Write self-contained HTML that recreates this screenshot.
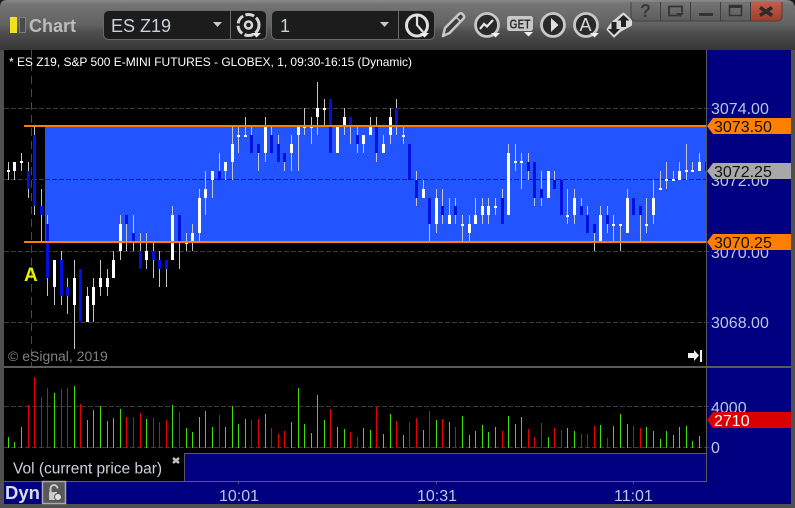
<!DOCTYPE html>
<html><head><meta charset="utf-8"><title>Chart</title>
<style>
html,body{margin:0;padding:0;background:#3c3c3c;width:795px;height:508px;overflow:hidden}
svg{display:block}
text{font-family:"Liberation Sans",sans-serif}
.ax{font-size:16px;fill:#bcc6e2}
.tg{font-size:16px;fill:#101010}
</style></head><body>
<svg width="795" height="508" viewBox="0 0 795 508" xmlns="http://www.w3.org/2000/svg">
<defs>
<linearGradient id="tb" x1="0" y1="0" x2="0" y2="1"><stop offset="0" stop-color="#8a8a8a"/><stop offset=".08" stop-color="#747474"/><stop offset=".5" stop-color="#626262"/><stop offset=".62" stop-color="#505050"/><stop offset="1" stop-color="#363636"/></linearGradient>
<linearGradient id="bt" x1="0" y1="0" x2="0" y2="1"><stop offset="0" stop-color="#747474"/><stop offset="1" stop-color="#5c5c5c"/></linearGradient>
<linearGradient id="rd" x1="0" y1="0" x2="0" y2="1"><stop offset="0" stop-color="#c0604a"/><stop offset="1" stop-color="#a23c2a"/></linearGradient>
</defs>
<rect width="795" height="508" fill="#505050"/>
<path d="M0 50V8Q0 0 8 0H785Q795 0 795 10V50Z" fill="url(#tb)"/>
<path d="M0 0H6Q0 0 0 6ZM795 0H787Q795 0 795 8Z" fill="#1c1c1c"/>
<!-- chart area -->
<rect x="4" y="50" width="702" height="431" fill="#000"/>
<rect x="707" y="50" width="84" height="454" fill="#000080"/>
<rect x="4" y="482" width="703" height="22" fill="#000080"/>
<rect x="185" y="454" width="521" height="27" fill="#000080"/>
<!-- blue zone -->
<rect x="45" y="127" width="661" height="114" fill="#2255ff"/>
<!-- grid -->
<g stroke="#3c3c3c" stroke-width="1" stroke-dasharray="5 2" fill="none" shape-rendering="crispEdges">
<path d="M4 108.5H712M4 251.5H712M4 322.5H712M4 406.5H712M4 447.5H712"/>
<path d="M45 179.5H712" stroke="#20264a"/>
<path d="M4 179.5H45"/>
<path d="M31.5 50V366" stroke-dasharray="8 5" stroke="#484848"/>
</g>
<!-- wicks -->
<path fill="none" stroke="#c4c4c4" stroke-width="1" shape-rendering="crispEdges" d="M8.5 162V180M14.5 162V180M21.5 153V171M28.5 162V198M34.5 126V215M41.5 189V242M47.5 215V296M54.5 260V305M61.5 251V305M67.5 278V314M74.5 260V349M87.5 287V322M93.5 278V322M100.5 260V296M107.5 269V296M113.5 251V278M120.5 215V260M126.5 215V251M133.5 215V251M140.5 233V269M146.5 233V269M153.5 242V278M159.5 251V287M166.5 260V287M172.5 206V260M179.5 215V269M186.5 233V251M192.5 224V251M199.5 189V242M205.5 171V215M212.5 171V198M219.5 153V180M225.5 162V180M232.5 126V180M238.5 126V153M245.5 117V137M251.5 126V153M258.5 144V171M265.5 117V162M271.5 126V153M278.5 135V162M284.5 153V171M291.5 135V171M298.5 126V171M304.5 108V135M311.5 117V144M317.5 82V135M324.5 99V126M344.5 108V135M350.5 117V144M357.5 126V153M363.5 135V153M370.5 117V135M376.5 117V162M383.5 135V153M390.5 108V144M396.5 99V135M403.5 126V144M416.5 171V206M423.5 180V198M429.5 198V242M436.5 189V233M442.5 189V224M449.5 198V224M455.5 198V224M462.5 215V242M469.5 215V242M475.5 198V224M482.5 198V224M488.5 198V224M495.5 198V215M502.5 189V224M508.5 144V215M515.5 144V171M521.5 153V189M528.5 153V180M534.5 162V206M541.5 171V206M554.5 171V189M567.5 189V224M574.5 189V224M581.5 198V215M587.5 206V233M594.5 224V251M600.5 206V242M607.5 206V233M613.5 215V242M620.5 224V251M627.5 189V233M640.5 206V242M646.5 198V233M653.5 180V224M660.5 171V189M666.5 162V189M673.5 171V180M679.5 162V180M686.5 144V180M692.5 162V172M699.5 153V171"/>
<!-- white bodies -->
<path fill="none" stroke="#fff" stroke-width="3" shape-rendering="crispEdges" d="M8.5 170V172M14.5 162V171M21.5 161V163M54.5 260V287M74.5 278V305M87.5 296V322M93.5 287V305M100.5 278V287M107.5 278V287M113.5 260V278M120.5 224V251M146.5 251V260M172.5 215V260M186.5 242V244M192.5 233V242M199.5 198V233M205.5 189V198M212.5 171V180M225.5 162V171M232.5 144V162M238.5 135V137M245.5 135V137M265.5 126V153M291.5 144V153M298.5 126V135M304.5 126V128M311.5 126V128M317.5 108V117M324.5 108V110M337.5 126V153M344.5 117V126M363.5 135V144M370.5 126V135M383.5 144V153M390.5 117V135M403.5 135V137M423.5 189V198M436.5 198V224M449.5 215V224M462.5 224V226M469.5 224V233M475.5 215V224M482.5 206V215M488.5 206V215M495.5 206V208M508.5 153V215M515.5 161V163M521.5 161V163M548.5 171V198M567.5 215V217M574.5 198V215M600.5 215V242M613.5 224V226M620.5 224V226M627.5 198V233M646.5 224V226M653.5 198V215M660.5 188V190M666.5 179V181M673.5 179V181M679.5 171V180M686.5 170V172M692.5 170V172M699.5 162V171"/>
<!-- blue bodies -->
<path fill="none" stroke="#0010e0" stroke-width="3" shape-rendering="crispEdges" d="M28.5 171V189M34.5 135V206M41.5 206V215M47.5 224V278M61.5 260V296M67.5 287V296M80.5 269V322M126.5 215V224M133.5 233V242M140.5 251V269M153.5 251V260M159.5 260V269M166.5 260V269M179.5 215V242M219.5 171V180M251.5 135V153M258.5 144V153M271.5 135V153M278.5 144V162M284.5 153V162M330.5 99V153M350.5 117V126M357.5 135V144M376.5 126V153M396.5 108V126M409.5 144V180M416.5 180V198M429.5 198V224M442.5 206V215M455.5 206V215M502.5 198V224M528.5 162V171M534.5 162V198M541.5 189V198M554.5 180V189M561.5 180V215M581.5 206V215M587.5 215V233M594.5 224V233M607.5 215V224M633.5 198V215M640.5 206V215"/>
<path d="M705 162h1v9h-1z" fill="#0010e0"/>
<!-- orange levels -->
<rect x="24" y="125" width="682" height="2" fill="#ff8000"/>
<rect x="24" y="241" width="682" height="2" fill="#ff8000"/>
<!-- volume -->
<path fill="none" stroke="#44dd00" stroke-width="1" shape-rendering="crispEdges" d="M8.5 437V448M14.5 442V448M21.5 427V448M54.5 393V448M74.5 386V448M87.5 420V448M93.5 410V448M100.5 406V448M107.5 421V448M113.5 418V448M120.5 409V448M146.5 419V448M172.5 405V448M186.5 428V448M192.5 432V448M199.5 417V448M205.5 411V448M212.5 427V448M225.5 427V448M232.5 406V448M238.5 424V448M245.5 419V448M265.5 414V448M291.5 422V448M298.5 388V448M304.5 424V448M311.5 433V448M317.5 395V448M324.5 420V448M337.5 427V448M344.5 429V448M363.5 428V448M370.5 430V448M383.5 434V448M390.5 414V448M403.5 435V448M423.5 430V448M436.5 420V448M449.5 422V448M462.5 416V448M469.5 435V448M475.5 431V448M482.5 425V448M488.5 432V448M495.5 427V448M508.5 416V448M515.5 424V448M521.5 417V448M548.5 437V448M567.5 428V448M574.5 431V448M600.5 425V448M613.5 426V448M620.5 414V448M627.5 424V448M646.5 427V448M653.5 431V448M660.5 439V448M666.5 431V448M673.5 435V448M679.5 427V448M686.5 426V448M692.5 441V448M699.5 436V448"/>
<path fill="none" stroke="#e80000" stroke-width="1" shape-rendering="crispEdges" d="M28.5 405V448M34.5 377V448M41.5 397V448M47.5 388V448M61.5 389V448M67.5 388V448M80.5 404V448M126.5 417V448M133.5 417V448M140.5 413V448M153.5 418V448M159.5 422V448M166.5 420V448M179.5 412V448M219.5 415V448M251.5 420V448M258.5 419V448M271.5 428V448M278.5 434V448M284.5 431V448M330.5 409V448M350.5 432V448M357.5 437V448M376.5 407V448M396.5 421V448M409.5 422V448M416.5 418V448M429.5 411V448M442.5 419V448M455.5 427V448M502.5 431V448M528.5 429V448M534.5 437V448M541.5 423V448M554.5 428V448M561.5 430V448M581.5 434V448M587.5 434V448M594.5 426V448M607.5 438V448M633.5 426V448M640.5 428V448"/>
<!-- frame lines -->
<g fill="#5a5a5a" shape-rendering="crispEdges">
<rect x="706" y="50" width="1" height="432"/>
<rect x="4" y="366" width="787" height="2"/>
<rect x="185" y="453" width="522" height="1"/>
<rect x="184" y="453" width="1" height="29"/>
<rect x="4" y="481" width="703" height="1"/>
<rect x="238" y="482" width="1" height="2"/><rect x="436" y="482" width="1" height="2"/><rect x="633" y="482" width="1" height="2"/>
</g>
<!-- price axis -->
<text class="ax" x="711" y="114">3074.00</text>
<text class="ax" x="711" y="186">3072.00</text>
<text class="ax" x="711" y="258">3070.00</text>
<text class="ax" x="711" y="328">3068.00</text>
<path d="M707 126L713 118H791V134H713Z" fill="#ff8000"/>
<text class="tg" x="714" y="132">3073.50</text>
<path d="M707 171L713 163H791V179H713Z" fill="#a8a8a8"/>
<text class="tg" x="714" y="177">3072.25</text>
<path d="M707 242L713 234H791V250H713Z" fill="#ff8000"/>
<text class="tg" x="714" y="248">3070.25</text>
<text class="ax" x="711" y="413">4000</text>
<text class="ax" x="711" y="453">0</text>
<path d="M707 420L713 412H791V428H713Z" fill="#d80000"/>
<text x="714" y="426" font-size="16" fill="#fff">2710</text>
<!-- chart labels -->
<text x="9" y="66" font-size="12" fill="#fff" textLength="403" lengthAdjust="spacing">* ES Z19, S&amp;P 500 E-MINI FUTURES - GLOBEX, 1, 09:30-16:15 (Dynamic)</text>
<text x="24" y="281" font-size="19" font-weight="bold" fill="#e6f000">A</text>
<text x="8" y="361" font-size="14" fill="#808080">© eSignal, 2019</text>
<path d="M688 353h6v-3l5 5.500-5 5.500v-3h-6z" fill="#f0f0f0"/><rect x="700" y="350" width="2" height="12" fill="#f0f0f0"/>
<text x="13" y="473.500" font-size="15.500" fill="#c8d2e0">Vol (current price bar)</text>
<path d="M173 458l6 5M179 458l-6 5" stroke="#c0c0c0" stroke-width="2.500" fill="none"/>
<text x="5" y="499" font-size="18.500" font-weight="bold" fill="#d8dce4">Dyn</text>
<rect x="42.500" y="481.500" width="23" height="22" fill="#585858" stroke="#a8a8a8" stroke-width="1.500"/>
<path d="M49 500v-8h8v8z" fill="#c8c8c8"/>
<path d="M50.500 492v-3.500a3.500 3.500 0 0 1 7 0" fill="none" stroke="#c8c8c8" stroke-width="2"/>
<circle cx="58" cy="497" r="3.500" fill="#e0e0e0" stroke="#555"/>
<text class="ax" x="219" y="501">10:01</text>
<text class="ax" x="417" y="501">10:31</text>
<text class="ax" x="614" y="501">11:01</text>
<!-- title area -->
<rect x="10" y="17" width="7" height="16" fill="#f0e020"/>
<rect x="19.500" y="17.500" width="6" height="15" fill="#4a4a4a" stroke="#7c7c7c"/>
<text x="29" y="32" font-size="18" font-weight="bold" fill="#bcbcbc">Chart</text>
<rect x="103.500" y="10.500" width="163" height="29" rx="5" fill="#1c1c1c" stroke="#6a6a6a"/>
<rect x="230" y="11" width="1" height="28" fill="#6a6a6a"/>
<text x="111" y="32" font-size="18" fill="#c8d2dc">ES Z19</text>
<path d="M213 22h9l-4.500 5z" fill="#c8c8c8"/>
<circle cx="248.500" cy="25" r="10.500" fill="none" stroke="#d8d8d8" stroke-width="3" stroke-dasharray="9 2.500"/>
<circle cx="248.500" cy="25" r="3.500" fill="none" stroke="#d8d8d8" stroke-width="2.500"/>
<path d="M252 33h9l-4.500 4.500z" fill="#eee"/>
<rect x="271.500" y="10.500" width="163" height="29" rx="5" fill="#1c1c1c" stroke="#6a6a6a"/>
<rect x="398" y="11" width="1" height="28" fill="#6a6a6a"/>
<text x="280" y="32" font-size="18" fill="#c8d2dc">1</text>
<path d="M380 22h9l-4.500 5z" fill="#c8c8c8"/>
<circle cx="417" cy="25.500" r="10.500" fill="none" stroke="#e0e0e0" stroke-width="3"/>
<path d="M417 15V25L423 32" fill="none" stroke="#e0e0e0" stroke-width="2.200"/>
<path d="M420 33h9l-4.500 4.500z" fill="#f0f0f0"/>
<!-- tool icons -->
<path d="M443 36l2-8L459 14q2-1.500 4 .500t.500 4L449.500 33z" fill="#3c3c3c" stroke="#c8c8c8" stroke-width="2.500" stroke-linejoin="round"/>
<path d="M456 17l4.500 4.500" stroke="#c8c8c8" stroke-width="1.500"/>
<circle cx="487" cy="25" r="11.500" fill="#2a2a2a" stroke="#c8c8c8" stroke-width="2.800"/>
<path d="M480 29l4-5 3 2.500 6-6.500" fill="none" stroke="#e8e8e8" stroke-width="2.200"/>
<path d="M491 33h9l-4.500 4.500z" fill="#f0f0f0"/>
<rect x="507" y="16" width="26" height="15" rx="2.500" fill="#c8c8c8"/>
<text x="509.500" y="28.500" font-size="13" font-weight="bold" fill="#333" textLength="21" lengthAdjust="spacingAndGlyphs">GET</text>
<path d="M524 32h9l-4.500 4.500z" fill="#f0f0f0"/>
<circle cx="553" cy="25" r="11.500" fill="#2a2a2a" stroke="#c8c8c8" stroke-width="2.800"/>
<path d="M551 18l7.500 7-7.500 7z" fill="#e0e0e0"/>
<circle cx="586" cy="25" r="11.500" fill="#2a2a2a" stroke="#c8c8c8" stroke-width="2.800"/>
<text x="579.500" y="31" font-size="18" fill="#d8d8d8">A</text>
<path d="M590 33h9l-4.500 4.500z" fill="#f0f0f0"/>
<!-- swap arrows -->
<path d="M623.500 13.500L631 20.500V25L620 31L614 36.500L607.500 29.500L612 23L618 18Z" fill="#d8d8d8" stroke="#d8d8d8" stroke-width="2" stroke-linejoin="round"/>
<path d="M623.500 15l6 5.500h-3.500V27h-5v-6.500h-3.500z" fill="#222"/>
<path d="M614 35l-6-6h3.500V22h5v7h3.500z" fill="#222"/>
<!-- window buttons -->
<path d="M631 2H782V16Q782 21 777 21H636Q631 21 631 16Z" fill="url(#bt)"/>
<path d="M751 2H782V16Q782 21 777 21H751Z" fill="url(#rd)"/>
<path d="M631 2V16Q631 21 636 21H777Q782 21 782 16V2" fill="none" stroke="#444" stroke-width="1"/>
<g fill="#3e3e3e" shape-rendering="crispEdges"><rect x="660" y="2" width="1" height="19"/><rect x="690" y="2" width="1" height="19"/><rect x="720" y="2" width="1" height="19"/><rect x="750" y="2" width="1" height="19"/></g>
<text x="640" y="17" font-size="18" font-weight="bold" fill="#3a3a3a">?</text>
<path d="M678 15.500h-9V6.500h13v6" fill="none" stroke="#333" stroke-width="1.800"/>
<path d="M676 13h8l-4 4z" fill="#333"/>
<rect x="699" y="13" width="14" height="3" fill="#333"/>
<rect x="729.500" y="5.500" width="12" height="10" fill="none" stroke="#333" stroke-width="1.500"/>
<rect x="729" y="5" width="13" height="3" fill="#333"/>
<path d="M760 7.500l12 8M772 7.500l-12 8" stroke="#2a2a2a" stroke-width="3.500" fill="none"/>
</svg>
</body></html>
